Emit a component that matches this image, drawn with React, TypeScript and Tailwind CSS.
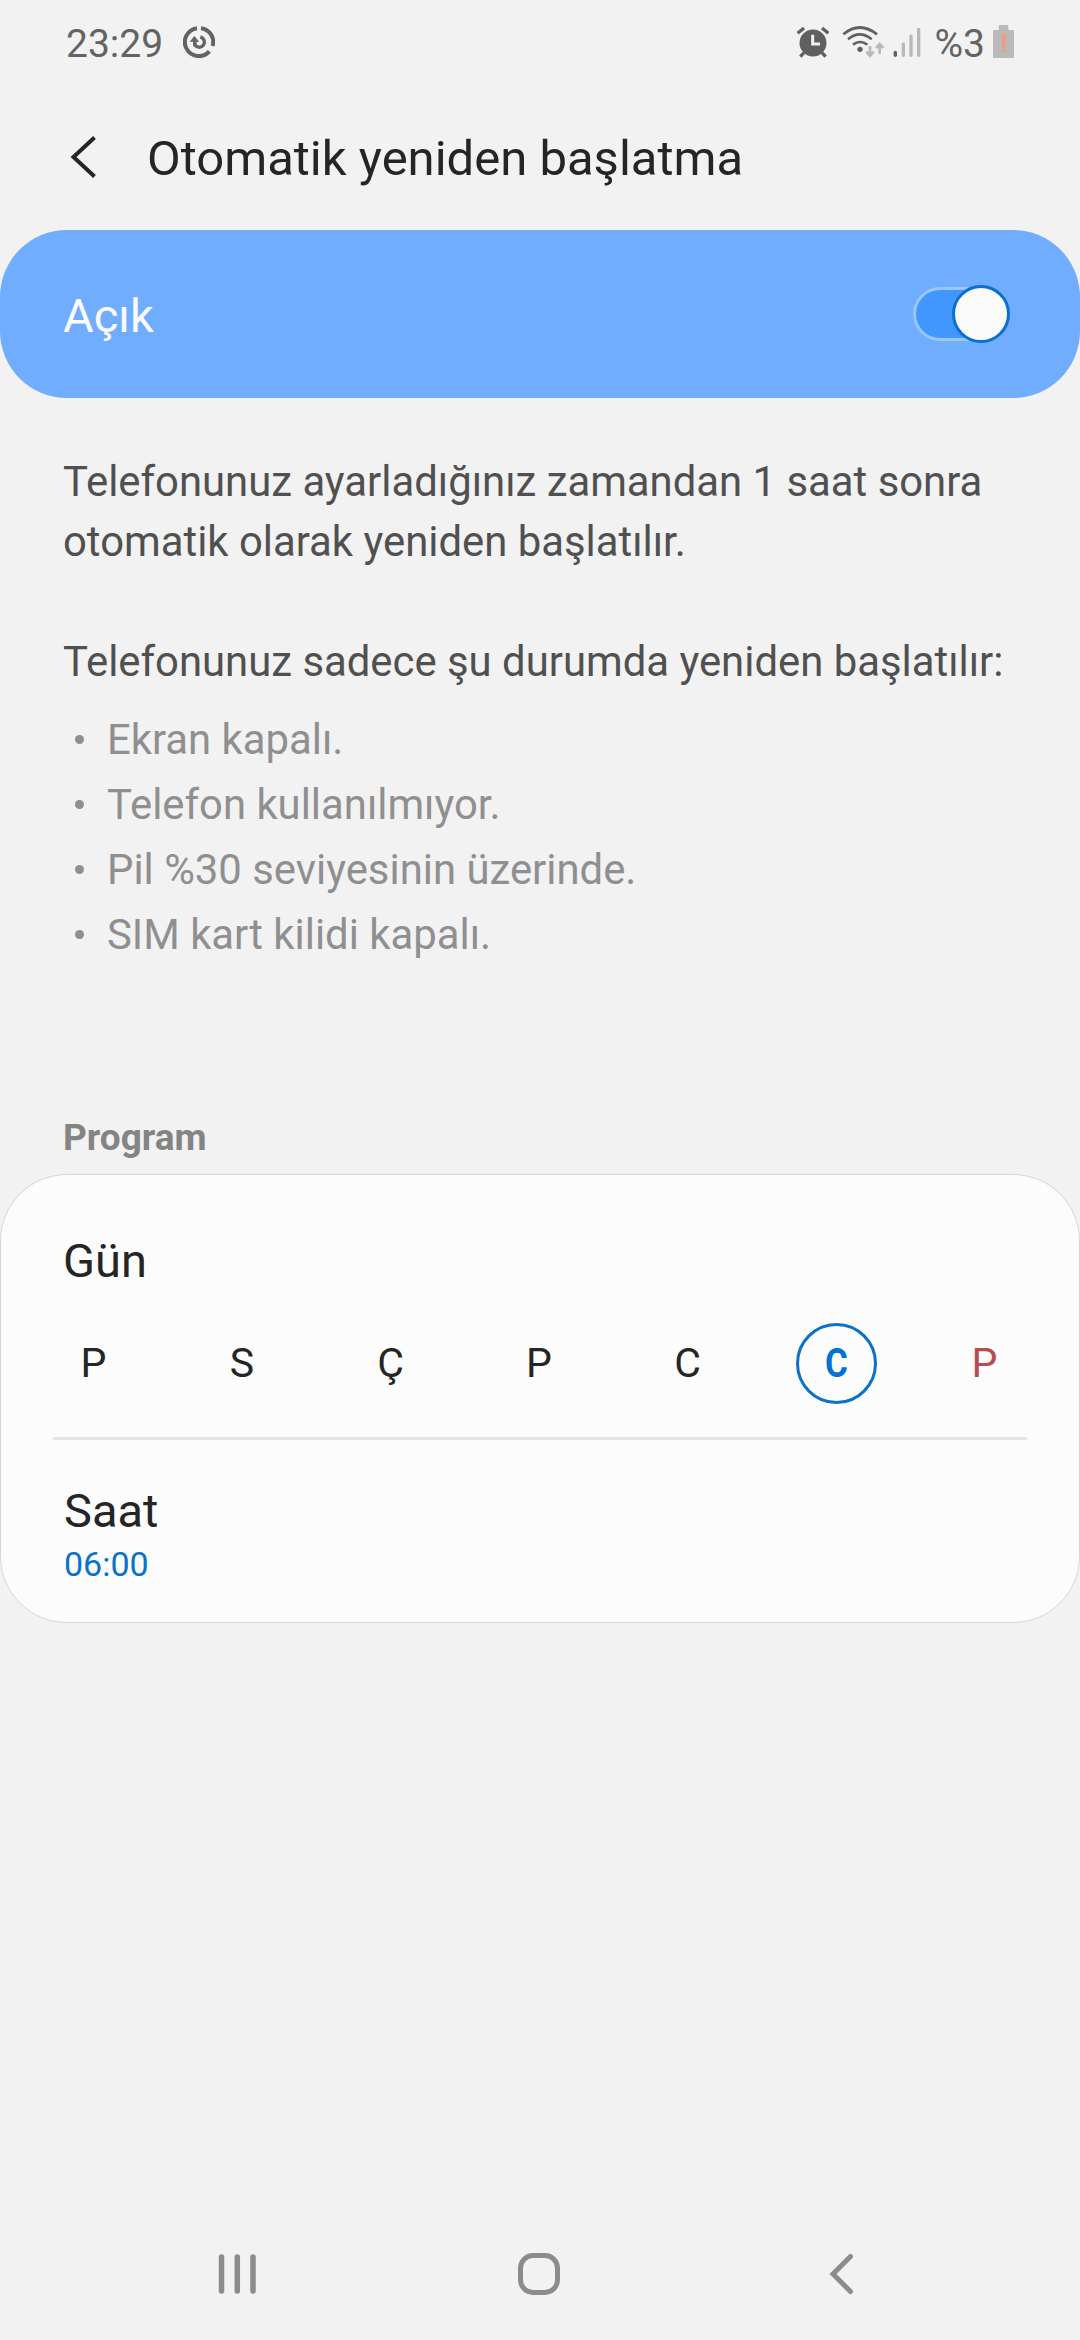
import React from 'react';

const conditions = [
  'Ekran kapalı.',
  'Telefon kullanılmıyor.',
  'Pil %30 seviyesinin üzerinde.',
  'SIM kart kilidi kapalı.'
];

const days = [
  { label: 'P', selected: false, color: 'text-[#252525]' },
  { label: 'S', selected: false, color: 'text-[#252525]' },
  { label: 'Ç', selected: false, color: 'text-[#252525]' },
  { label: 'P', selected: false, color: 'text-[#252525]' },
  { label: 'C', selected: false, color: 'text-[#252525]' },
  { label: 'C', selected: true, color: 'text-[#0074d4]' },
  { label: 'P', selected: false, color: 'text-[#b84b4d]' }
];

function RestartIcon() {
  return (
    <svg className="w-8 h-8" viewBox="0 0 96 96" fill="none" stroke="#636363" strokeWidth="12">
      <path d="M54 6.5A42 42 0 0 1 89 60" />
      <path d="M79 76A42 42 0 1 1 42 6.5" />
      <path d="M52 33A15.5 15.5 0 1 1 36 57" strokeWidth="10" />
      <path d="M20 47L34 30L49 47H41V60H30V47Z" fill="#636363" stroke="none" />
    </svg>
  );
}

function AlarmIcon() {
  return (
    <svg className="w-[34px] h-8" viewBox="0 0 102 96">
      <g stroke="#606060" strokeWidth="10" fill="none">
        <path d="M5 22L24 6M78 6L97 22" />
        <path d="M24 80L13 92M78 80L89 92" />
      </g>
      <circle cx="51" cy="51" r="40.5" fill="#606060" />
      <path d="M50 26V54H72" stroke="#f2f2f2" strokeWidth="9" fill="none" />
    </svg>
  );
}

function WifiIcon() {
  return (
    <svg className="w-[43px] h-8" viewBox="0 0 129 96" fill="none">
      <g stroke="#606060" strokeWidth="8">
        <path d="M4 25Q53 -16 105 25" />
        <path d="M18 40Q53 10 89 40" />
        <path d="M33 56Q54 40 76 56" />
      </g>
      <circle cx="54" cy="70" r="8" fill="#606060" />
      <g stroke="#b9b9b9" strokeWidth="8">
        <path d="M84 60V88M73 77L84 89L95 77" />
        <path d="M113 84V56M102 66L113 54L124 66" />
      </g>
    </svg>
  );
}

function SignalIcon() {
  return (
    <svg className="w-7 h-8" viewBox="0 0 84 96" strokeWidth="10" strokeLinecap="round">
      <path d="M7 79V88" stroke="#606060" />
      <path d="M31 54V88M54 30V88M77 10V88" stroke="#b9b9b9" />
    </svg>
  );
}

function BatteryIcon() {
  return (
    <svg className="w-[21px] h-[33px]" viewBox="0 0 63 99">
      <path d="M21 0H42Q46 0 46 4V15H59Q63 15 63 19V95Q63 99 59 99H4Q0 99 0 95V19Q0 15 4 15H17V4Q17 0 21 0Z" fill="#bababa" />
      <path d="M26 26H38L36 68H28Z" fill="#f59a7d" />
      <circle cx="32" cy="77" r="6" fill="#f59a7d" />
    </svg>
  );
}

function StatusBar() {
  return (
    <div className="flex h-[86px] items-center pl-[66px] pr-[66px] text-[39px] text-[#636363]">
      <span className="mt-px leading-[46px]">23:29</span>
      <div className="ml-[20px] mt-[-2px]"><RestartIcon /></div>
      <div className="ml-auto mt-[-3px]"><AlarmIcon /></div>
      <div className="ml-[12px] mt-[-3px]"><WifiIcon /></div>
      <div className="ml-[8px] mt-[-2px]"><SignalIcon /></div>
      <span className="ml-[14px] mt-px leading-[46px]">%3</span>
      <div className="ml-[8px] mt-[-3px]"><BatteryIcon /></div>
    </div>
  );
}

function Header() {
  return (
    <header className="flex h-[144px] items-center pl-[70px]">
      <svg className="mt-[-3px] w-[27px] h-[42px]" viewBox="0 0 27 42" fill="none" stroke="#252525" strokeWidth="4">
        <path d="M24.500 1.500L3.500 21L24.500 40.500" />
      </svg>
      <h1 className="ml-[50px] mt-[2px] text-[49px] leading-[60px] text-[#252525]">Otomatik yeniden başlatma</h1>
    </header>
  );
}

function Toggle() {
  return (
    <div className="relative mr-[70px] h-[58px] w-[97px]">
      <div className="absolute left-0 top-[2px] h-[54px] w-[95px] rounded-full border-[3px] border-[#9ac6ff] bg-[#4297ff]" />
      <div className="absolute right-0 top-0 h-[58px] w-[58px] rounded-full border-[3px] border-[#0a70cf] bg-[#fafafa]" />
    </div>
  );
}

function NavBar() {
  return (
    <nav className="mt-auto flex h-[132px] items-center pl-[218px]">
      <svg className="w-[39px] h-[42px]" viewBox="0 0 39 42" stroke="#8c8c8c" strokeWidth="5.500" strokeLinecap="round">
        <path d="M3.500 4V38M19.300 4V38M35 4V38" />
      </svg>
      <svg className="ml-[261px] w-[42px] h-[42px]" viewBox="0 0 42 42" fill="none" stroke="#8c8c8c" strokeWidth="5">
        <rect x="2.500" y="2.500" width="37" height="37" rx="12.500" />
      </svg>
      <svg className="ml-[269px] w-[26px] h-[42px]" viewBox="0 0 26 42" fill="none" stroke="#8c8c8c" strokeWidth="5" strokeLinecap="round">
        <path d="M21.500 3.500L4 21L21.500 38.500" />
      </svg>
    </nav>
  );
}

export default function App() {
  return (
    <div className="flex h-[2340px] w-[1080px] flex-col overflow-hidden bg-[#f2f2f2] font-['Roboto',sans-serif]">
      <StatusBar />
      <Header />

      <section className="flex h-[168px] items-center justify-between rounded-[67px] bg-[#70adff] pl-[63px]">
        <span className="mt-[3px] text-[47px] leading-[60px] text-[#fafaff]">Açık</span>
        <Toggle />
      </section>

      <section className="pl-[63px] pt-[54px] text-[41.85px] leading-[60px] text-[#505050]">
        <p>Telefonunuz ayarladığınız zamandan 1 saat sonra<br />otomatik olarak yeniden başlatılır.</p>
        <p className="mt-[60px]">Telefonunuz sadece şu durumda yeniden başlatılır:</p>
        <ul className="mt-[15px] leading-[65px] text-[#8f8f8f]">
          {conditions.map((condition) => (
            <li key={condition} className="flex items-center pl-[12px]">
              <span className="mr-[23px] h-[9px] w-[9px] rounded-full bg-[#8f8f8f]" />
              {condition}
            </li>
          ))}
        </ul>
      </section>

      <h2 className="mt-[146px] pl-[63px] text-[37px] font-bold leading-[50px] text-[#848484]">Program</h2>

      <section className="mt-[11px] h-[449px] rounded-[67px] border border-[#d6d6d6] bg-[#fcfcfc] pt-[56px] text-[#252525]">
        <h3 className="pl-[62px] text-[47px] leading-[60px]">Gün</h3>
        <div className="mt-[32px] flex justify-between pl-[52px] pr-[54px]">
          {days.map((day, index) => (
            <div
              key={index}
              className={`flex h-[81px] w-[81px] items-center justify-center rounded-full text-[41px] ${day.color} ${day.selected ? 'border-[3px] border-[#0a72c8] font-bold' : ''}`}
            >
              <span className={day.selected ? 'scale-x-[0.85]' : ''}>{day.label}</span>
            </div>
          ))}
        </div>
        <div className="mx-[52px] mt-[33px] h-[3px] bg-[#e5e5e5]" />
        <h3 className="mt-[41px] pl-[63px] text-[47px] leading-[60px]">Saat</h3>
        <p className="pl-[63px] text-[34px] leading-[46px] text-[#0a72c8]">06:00</p>
      </section>

      <NavBar />
    </div>
  );
}
